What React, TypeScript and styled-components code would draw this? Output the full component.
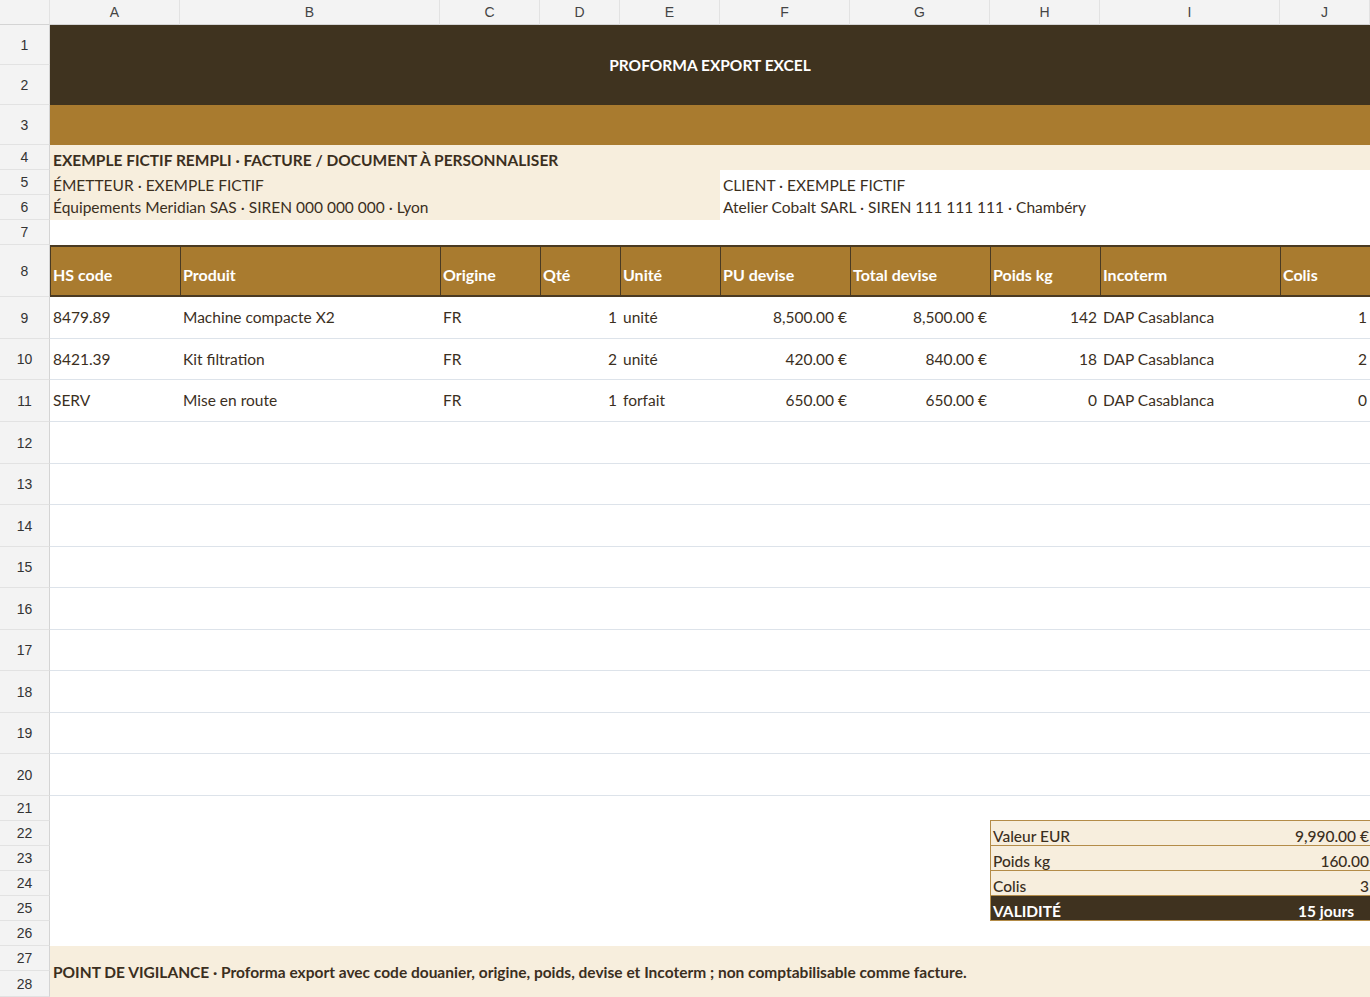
import styled, { createGlobalStyle } from 'styled-components';

const Global = createGlobalStyle`
  body { margin: 0; background: #fff; font-family: Lato, "Open Sans", sans-serif; }
`;

const cols = [50, 130, 260, 100, 80, 100, 130, 140, 110, 180, 90];
const rows = [25, 40, 40, 40, 25, 25, 25, 25, 52, 42, 41, 42, 42, 41, 42, 41, 42, 41, 42, 41, 42, 25, 25, 25, 25, 25, 25, 25, 26];

const Sheet = styled.div`
  display: grid;
  grid-template-columns: ${cols.map((c) => c + 'px').join(' ')};
  grid-template-rows: ${rows.map((r) => r + 'px').join(' ')};
  width: 1370px;
  height: 997px;
  overflow: hidden;
  color: #3b2f1e;
  font-size: 15.5px;
`;

const ColHead = styled.div`
  background: #f3f3f3;
  border-right: 1px solid #e2e2e2;
  border-bottom: 1px solid #d4d4d4;
  display: flex;
  align-items: center;
  justify-content: center;
  font-family: "Liberation Sans", Arial, sans-serif;
  font-size: 14px;
  color: #444;
`;

const RowNum = styled.div<{ $span?: number }>`
  grid-row: span ${(p) => p.$span ?? 1};
  background: #f3f3f3;
  border-bottom: 1px solid #e2e2e2;
  border-right: 1px solid #d4d4d4;
  display: flex;
  align-items: center;
  justify-content: center;
  font-family: "Liberation Sans", Arial, sans-serif;
  font-size: 14px;
  color: #333;
`;

const Cell = styled.div<{
  $cols?: number;
  $rows?: number;
  $bg?: string;
  $bold?: boolean;
  $align?: 'left' | 'right' | 'center';
  $valign?: 'center' | 'flex-end';
  $line?: boolean;
  $color?: string;
}>`
  grid-column: span ${(p) => p.$cols ?? 1};
  grid-row: span ${(p) => p.$rows ?? 1};
  background: ${(p) => p.$bg ?? 'transparent'};
  font-weight: ${(p) => (p.$bold ? 700 : 400)};
  color: ${(p) => p.$color ?? 'inherit'};
  display: flex;
  align-items: ${(p) => p.$valign ?? 'center'};
  justify-content: ${(p) => (p.$align === 'right' ? 'flex-end' : p.$align === 'center' ? 'center' : 'flex-start')};
  padding: 0 3px 1px;
  white-space: nowrap;
  border-bottom: ${(p) => (p.$line ? '1px solid #dde3ea' : 'none')};
  min-width: 0;
`;

const HeadCell = styled.div`
  background: #a97b2f;
  color: #fff;
  font-weight: 700;
  font-size: 16px;
  display: flex;
  align-items: center;
  padding: 6px 2px 0;
  border-top: 2px solid #4a3a22;
  border-bottom: 2px solid #4a3a22;
  border-left: 1px solid #4a3a22;
  &:last-child { border-right: 1px solid #4a3a22; }
`;

const Box = styled.div<{ $dark?: boolean; $cols?: number; $align?: string }>`
  grid-column: span ${(p) => p.$cols ?? 1};
  background: ${(p) => (p.$dark ? '#3f321f' : '#f7eedd')};
  color: ${(p) => (p.$dark ? '#fff' : '#3b2f1e')};
  font-weight: ${(p) => (p.$dark ? 700 : 500)};
  display: flex;
  align-items: flex-end;
  justify-content: ${(p) => p.$align ?? 'flex-start'};
  padding: 0 2px 0 2px;
  border-top: 1px solid #b48c48;
  border-bottom: 1px solid #b48c48;
  &:first-of-type { }
`;

const BoxRow = styled.div`
  grid-column: span 3;
  display: grid;
  grid-template-columns: 110px 180px 90px;
  border-left: 1px solid #b48c48;
  border-right: 1px solid #b48c48;
  margin-top: -1px;
`;

const letters = ['A', 'B', 'C', 'D', 'E', 'F', 'G', 'H', 'I', 'J'];
const heads = ['HS code', 'Produit', 'Origine', 'Qté', 'Unité', 'PU devise', 'Total devise', 'Poids kg', 'Incoterm', 'Colis'];
const items = [
  ['8479.89', 'Machine compacte X2', 'FR', '1', 'unité', '8,500.00 €', '8,500.00 €', '142', 'DAP Casablanca', '1'],
  ['8421.39', 'Kit filtration', 'FR', '2', 'unité', '420.00 €', '840.00 €', '18', 'DAP Casablanca', '2'],
  ['SERV', 'Mise en route', 'FR', '1', 'forfait', '650.00 €', '650.00 €', '0', 'DAP Casablanca', '0'],
];
const rightCols = [3, 5, 6, 7, 9];
const cream = '#f7eedd';

export default function App() {
  return (
    <Sheet>
      <Global />
      <ColHead />
      {letters.map((l) => (
        <ColHead key={l}>{l}</ColHead>
      ))}

      <RowNum>1</RowNum>
      <Cell $cols={10} $rows={2} $bg="#3f331f" $bold $align="center" $color="#fff">
        PROFORMA EXPORT EXCEL
      </Cell>
      <RowNum>2</RowNum>

      <RowNum>3</RowNum>
      <Cell $cols={10} $bg="#a97b2f" />

      <RowNum>4</RowNum>
      <Cell $cols={10} $bg={cream} $bold $valign="flex-end">
        EXEMPLE FICTIF REMPLI · FACTURE / DOCUMENT À PERSONNALISER
      </Cell>

      <RowNum>5</RowNum>
      <Cell $cols={5} $bg={cream} $valign="flex-end">ÉMETTEUR · EXEMPLE FICTIF</Cell>
      <Cell $cols={5} $valign="flex-end">CLIENT · EXEMPLE FICTIF</Cell>
      <RowNum>6</RowNum>
      <Cell $cols={5} $bg={cream}>Équipements Meridian SAS · SIREN 000 000 000 · Lyon</Cell>
      <Cell $cols={5}>Atelier Cobalt SARL · SIREN 111 111 111 · Chambéry</Cell>

      <RowNum>7</RowNum>
      <Cell $cols={10} />

      <RowNum>8</RowNum>
      {heads.map((h) => (
        <HeadCell key={h}>{h}</HeadCell>
      ))}

      {items.map((it, r) => (
        <>
          <RowNum key={'n' + r}>{9 + r}</RowNum>
          {it.map((v, c) => (
            <Cell key={r + '-' + c} $line $align={rightCols.includes(c) ? 'right' : 'left'}>
              {v}
            </Cell>
          ))}
        </>
      ))}

      {Array.from({ length: 9 }, (_, i) => (
        <>
          <RowNum key={'e' + i}>{12 + i}</RowNum>
          <Cell key={'ec' + i} $cols={10} $line />
        </>
      ))}

      <RowNum>21</RowNum>
      <Cell $cols={10} />

      <RowNum>22</RowNum>
      <Cell $cols={7} />
      <BoxRow>
        <Box $cols={2}>Valeur EUR</Box>
        <Box $align="flex-end">9,990.00 €</Box>
      </BoxRow>
      <RowNum>23</RowNum>
      <Cell $cols={7} />
      <BoxRow>
        <Box $cols={2}>Poids kg</Box>
        <Box $align="flex-end">160.00</Box>
      </BoxRow>
      <RowNum>24</RowNum>
      <Cell $cols={7} />
      <BoxRow>
        <Box $cols={2}>Colis</Box>
        <Box $align="flex-end">3</Box>
      </BoxRow>
      <RowNum>25</RowNum>
      <Cell $cols={7} />
      <BoxRow>
        <Box $dark $cols={2}>VALIDITÉ</Box>
        <Box $dark $align="center">15 jours</Box>
      </BoxRow>

      <RowNum>26</RowNum>
      <Cell $cols={10} />

      <RowNum>27</RowNum>
      <Cell $cols={10} $rows={2} $bg={cream} $bold $valign="center" style={{ paddingTop: 2 }}>
        POINT DE VIGILANCE · Proforma export avec code douanier, origine, poids, devise et Incoterm ; non comptabilisable comme facture.
      </Cell>
      <RowNum>28</RowNum>
    </Sheet>
  );
}
